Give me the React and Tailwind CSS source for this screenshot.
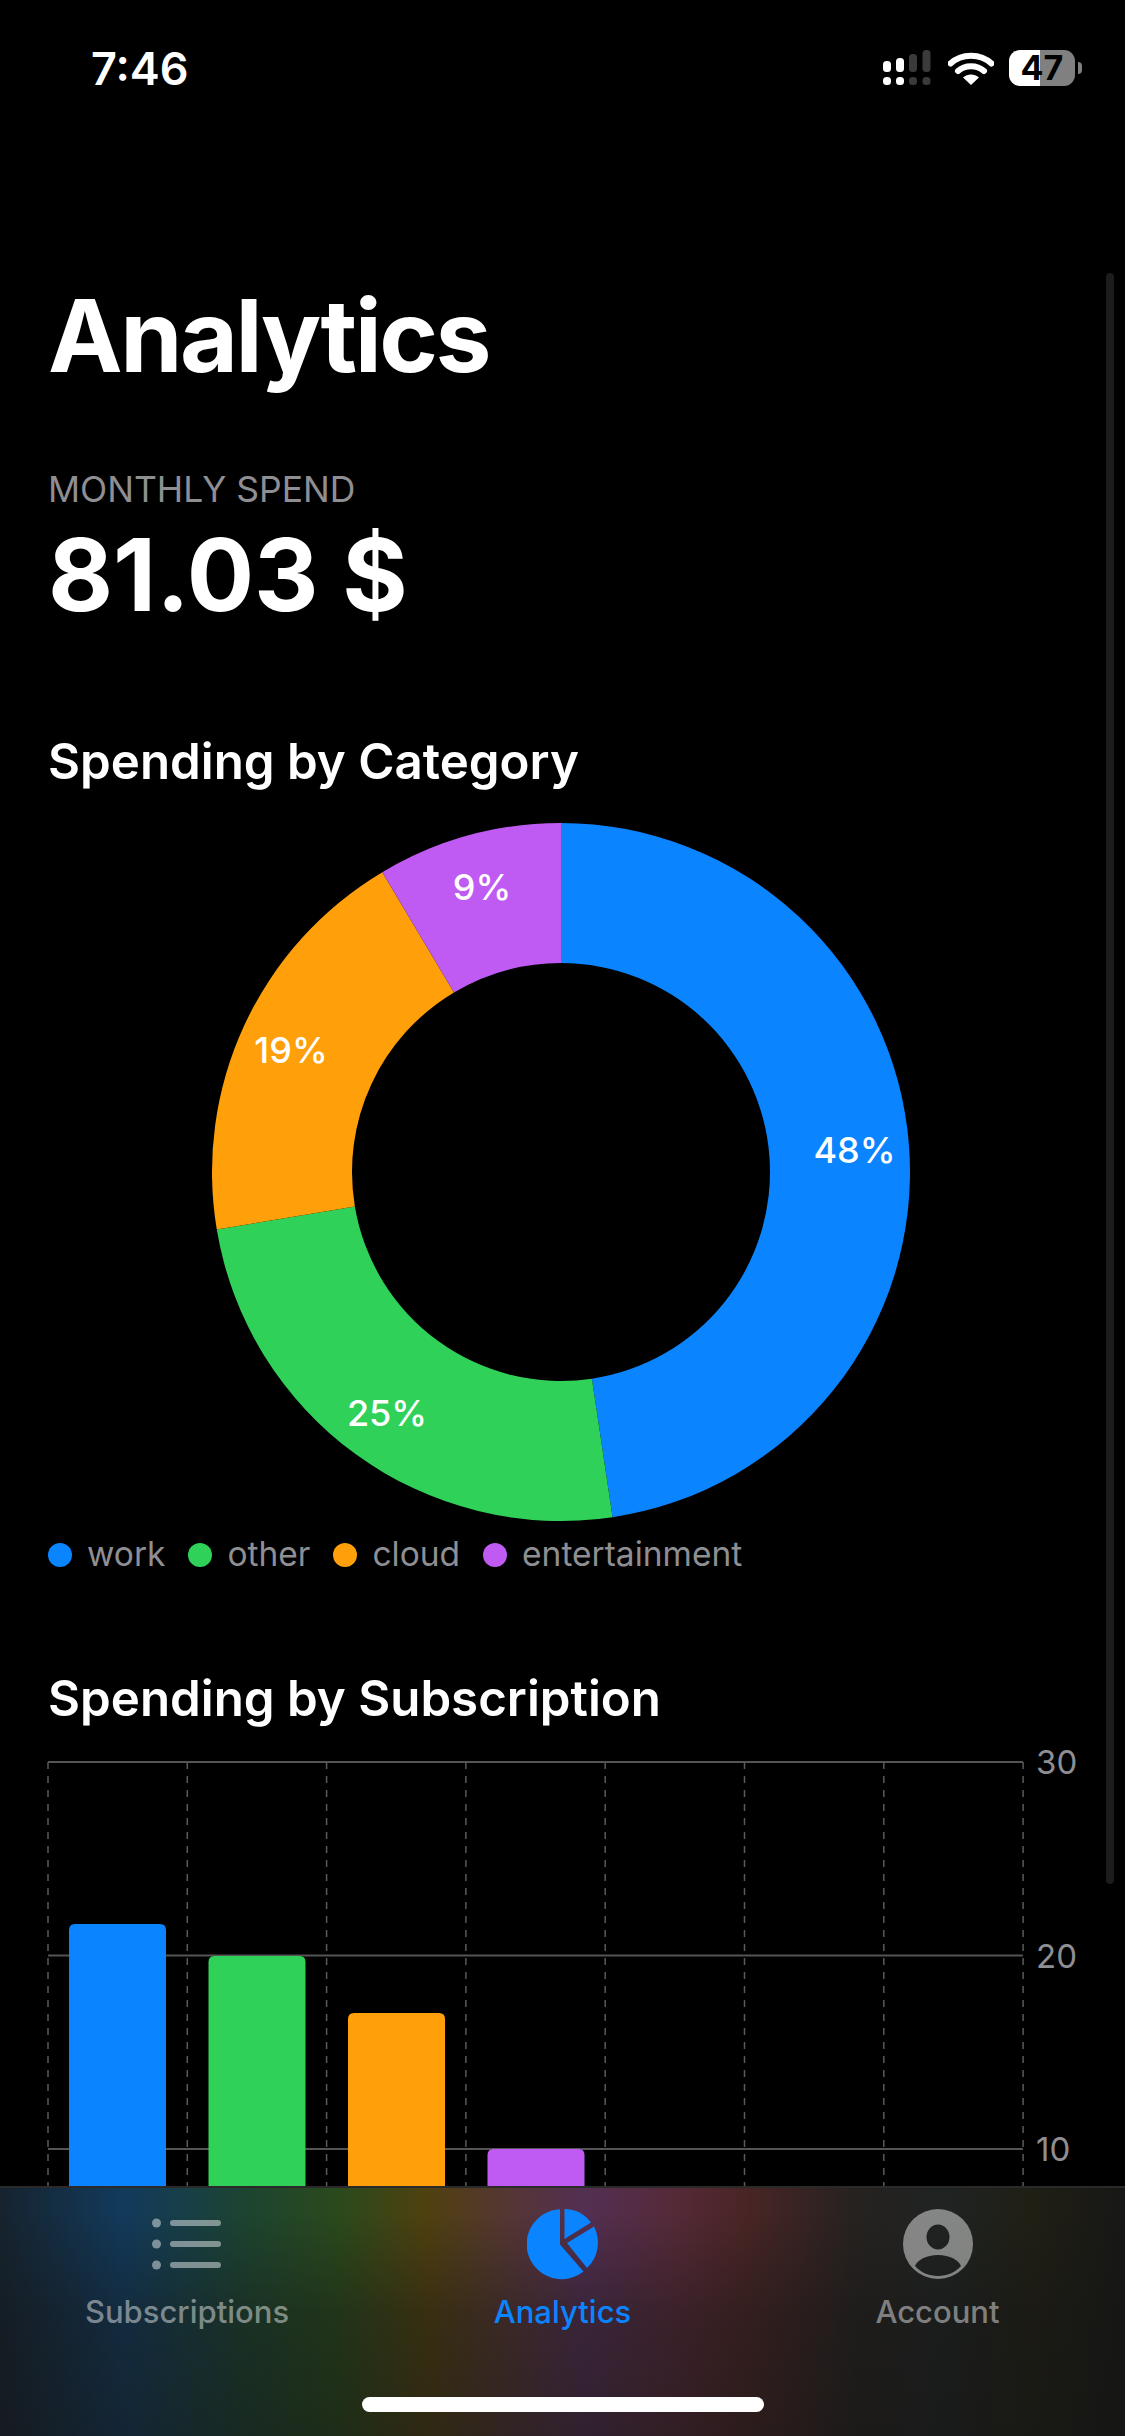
const font = { fontFamily: "Inter, 'Noto Sans', sans-serif" };

const slices = [
  { color: "#0a84ff", from: 0, to: 171.5 },
  { color: "#30d158", from: 171.5, to: 260.5 },
  { color: "#ff9f0a", from: 260.5, to: 329.2 },
  { color: "#bf5af2", from: 329.2, to: 360 },
];

const legend = [
  { name: "work", color: "bg-[#0a84ff]" },
  { name: "other", color: "bg-[#30d158]" },
  { name: "cloud", color: "bg-[#ff9f0a]" },
  { name: "entertainment", color: "bg-[#bf5af2]" },
];

// bar tops are in page pixels, same as the chart's viewBox
const bars = [
  { x: 21, top: 1925, color: "#0a84ff" },
  { x: 160.5, top: 1957, color: "#30d158" },
  { x: 300, top: 2014, color: "#ff9f0a" },
  { x: 439.5, top: 2150, color: "#bf5af2" },
];

function point(r, deg) {
  const a = (deg * Math.PI) / 180;
  return [349 + r * Math.sin(a), 349 - r * Math.cos(a)];
}

function slicePath(from, to) {
  const [x1, y1] = point(349, from);
  const [x2, y2] = point(349, to);
  const [x3, y3] = point(209, to);
  const [x4, y4] = point(209, from);
  const large = to - from > 180 ? 1 : 0;
  return `M${x1} ${y1}A349 349 0 ${large} 1 ${x2} ${y2}L${x3} ${y3}A209 209 0 ${large} 0 ${x4} ${y4}Z`;
}

const Donut = () => (
  <svg width="698" height="698" viewBox="0 0 698 698" className="mt-[37px] ml-[-3px] block self-center">
    {slices.map((s) => (
      <path key={s.color} d={slicePath(s.from, s.to)} fill={s.color} />
    ))}
    <g fill="#fff" fontSize="36" fontWeight="500" textAnchor="middle" style={font}>
      <text x="642.5" y="340">48%</text>
      <text x="175" y="603">25%</text>
      <text x="79" y="240">19%</text>
      <text x="270" y="77">9%</text>
    </g>
  </svg>
);

const BarChart = () => {
  const left = 48;
  const top = 1763;
  return (
    <svg width="1075" height="640" viewBox="48 1740 1075 640" className="mt-[15px] block overflow-visible">
      {[0, 1, 2, 3, 4, 5, 6, 7].map((i) => (
        <line
          key={i}
          x1={left + i * 139.3}
          x2={left + i * 139.3}
          y1={top}
          y2="2343"
          stroke="#5a5a5a"
          strokeWidth="1.5"
          strokeDasharray="7 7"
        />
      ))}
      {[30, 20, 10].map((n, i) => (
        <g key={n}>
          <line x1={left} x2="1023" y1={top + i * 193.5} y2={top + i * 193.5} stroke="#555" strokeWidth="2" />
          <text x="1036" y={top + i * 193.5 + 12} fill="#8e8e93" fontSize="33" style={font}>
            {n}
          </text>
        </g>
      ))}
      {bars.map((b) => (
        <path
          key={b.color}
          d={`M${left + b.x} 2343V${b.top + 6}Q${left + b.x} ${b.top} ${left + b.x + 6} ${b.top}H${left + b.x + 91}Q${left + b.x + 97} ${b.top} ${left + b.x + 97} ${b.top + 6}V2343Z`}
          fill={b.color}
        />
      ))}
    </svg>
  );
};

const StatusBar = () => (
  <div className="flex h-[136px] items-center justify-between pl-[91px] pr-[43px]">
    <span className="text-[45px] font-semibold leading-none text-white">7:46</span>
    <div className="flex items-center">
      <svg width="48" height="36" viewBox="0 0 48 36">
        <g fill="#fff">
          <rect x="0" y="11" width="8" height="11" rx="3.5" />
          <rect x="13" y="8" width="8" height="14" rx="3.5" />
          <rect x="0" y="27" width="8" height="8" rx="3.5" />
          <rect x="13" y="27" width="8" height="8" rx="3.5" />
        </g>
        <g fill="#3a3a3a">
          <rect x="26" y="4" width="8" height="18" rx="3.5" />
          <rect x="39.5" y="0" width="8" height="22" rx="3.5" />
          <rect x="26" y="27" width="8" height="8" rx="3.5" />
          <rect x="39.5" y="27" width="8" height="8" rx="3.5" />
        </g>
      </svg>
      <svg width="46" height="34" viewBox="0 0 46 34" className="ml-[17px]">
        <path
          d="M2.500 12.500C13.500 2 32.500 2 43.500 12.500M10 20C17 13.500 29 13.500 36 20"
          fill="none"
          stroke="#fff"
          strokeWidth="6"
          strokeLinecap="round"
        />
        <path d="M15 26.500C19.500 22.500 26.500 22.500 31 26.500L23 34Z" fill="#fff" />
      </svg>
      <div className="ml-[15px] flex h-[36px] w-[66px] items-center justify-center rounded-[11px] bg-[linear-gradient(to_right,#fff_47%,#808080_47%)] text-[34px] font-bold leading-none text-black">
        47
      </div>
      <div className="ml-[3px] h-[12px] w-[4px] rounded-r-full bg-[#808080]" />
    </div>
  </div>
);

const TabBar = () => (
  <div className="absolute bottom-0 left-0 right-0 h-[250px] border-t-2 border-[#2a2a2a] bg-[linear-gradient(to_right,#16232e_0%,#123a5c_11%,#1d4430_22%,#2a4a1c_30%,#50400f_38%,#553538_46%,#532f52_52%,#552a38_60%,#4a2525_66%,#262220_76%,#1f2322_84%,#201f14_92%,#171716_100%)]">
    <div className="absolute inset-0 bg-[linear-gradient(to_bottom,rgba(18,18,18,0)_10%,rgba(20,20,20,0.4)_50%,rgba(20,20,20,0.55)_100%)]" />
    <div className="relative grid grid-cols-3 pt-[20px] text-[31px] font-medium leading-none" style={font}>
      <div className="ml-[-1px] flex flex-col items-center text-white/45">
        <svg width="70" height="72" viewBox="0 0 70 72" className="fill-white/45">
          <circle cx="4.500" cy="15" r="4.500" />
          <circle cx="4.500" cy="36" r="4.500" />
          <circle cx="4.500" cy="57" r="4.500" />
          <rect x="18" y="12" width="51" height="6" rx="3" />
          <rect x="18" y="33" width="51" height="6" rx="3" />
          <rect x="18" y="54" width="51" height="6" rx="3" />
        </svg>
        <span className="mt-[16px]">Subscriptions</span>
      </div>
      <div className="flex flex-col items-center text-[#0a84ff]">
        <svg width="72" height="72" viewBox="0 0 72 72" fill="#0a84ff">
          <path d="M33 1.200V36.500L56.500 63.500A35 35 0 1 1 33 1.200Z" />
          <path d="M37.500 1V31L64 14.500A34.500 34.500 0 0 0 37.500 1Z" />
          <path d="M40 35L67 18.500A35 35 0 0 1 60 60Z" />
        </svg>
        <span className="mt-[16px]">Analytics</span>
      </div>
      <div className="flex flex-col items-center text-white/45">
        <svg width="72" height="72" viewBox="0 0 72 72" className="fill-white/45">
          <path
            fillRule="evenodd"
            d="M36 1A35 35 0 1 1 36 71A35 35 0 1 1 36 1ZM36 16.500A11.500 12.500 0 1 0 36 41.500A11.500 12.500 0 1 0 36 16.500ZM36 47C24 47 15.500 52 13 58C18.500 64.500 27 68 36 68C45 68 53.500 64.500 59 58C56.500 52 48 47 36 47Z"
          />
        </svg>
        <span className="mt-[16px]">Account</span>
      </div>
    </div>
    <div className="absolute bottom-[24px] left-[362px] h-[15px] w-[402px] rounded-full bg-white" />
  </div>
);

export default function App() {
  return (
    <div className="relative h-[2436px] w-[1125px] overflow-hidden bg-black" style={font}>
      <StatusBar />
      <main className="flex flex-col px-[48px] text-white">
        <h1 className="mt-[150px] text-[100px] font-bold leading-none tracking-[-2.5px]">Analytics</h1>
        <p className="mt-[86px] text-[35.500px] leading-none text-[#8e8e93]">MONTHLY SPEND</p>
        <p className="mt-[17px] text-[100px] font-bold leading-none">81.03 $</p>
        <h2 className="mt-[112px] text-[49.250px] font-semibold leading-none">Spending by Category</h2>
        <Donut />
        <ul className="mt-[17px] flex items-center gap-[23px] text-[33.500px] leading-none text-[#8e8e93]">
          {legend.map((item) => (
            <li key={item.name} className="flex items-center gap-[15px]">
              <span className={`h-[24px] w-[24px] rounded-full ${item.color}`} />
              {item.name}
            </li>
          ))}
        </ul>
        <h2 className="mt-[103px] text-[49.250px] font-semibold leading-none">Spending by Subscription</h2>
        <BarChart />
      </main>
      <div className="absolute right-[11px] top-[273px] h-[1611px] w-[8px] rounded-full bg-[#1c1c1e]" />
      <TabBar />
    </div>
  );
}
